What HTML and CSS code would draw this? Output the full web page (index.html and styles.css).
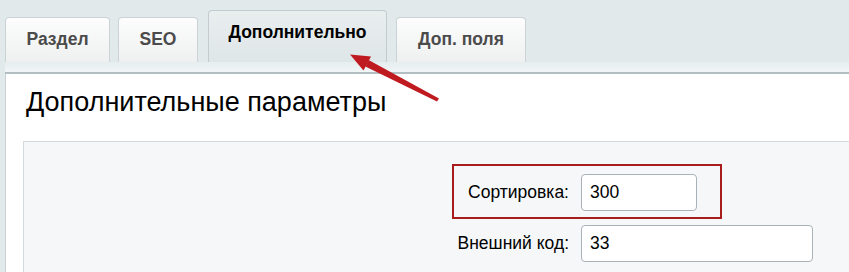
FILE: index.html
```html
<!DOCTYPE html>
<html lang="ru">
<head>
  <meta charset="UTF-8">
  <title>Дополнительные параметры</title>
  <link rel="stylesheet" href="styles.css">
</head>
<body>
  <div class="page">
    <div class="tabs">
      <div class="tab tab-razdel">Раздел</div>
      <div class="tab tab-seo">SEO</div>
      <div class="tab tab-active">Дополнительно</div>
      <div class="tab tab-fields">Доп. поля</div>
    </div>
    <div class="tabs-line"></div>
    <div class="content">
      <h2 class="title">Дополнительные параметры</h2>
      <div class="panel">
        <div class="row">
          <label class="label">Сортировка:</label>
          <input class="field field-short" type="text" value="300">
          <span class="highlight"></span>
        </div>
        <div class="row">
          <label class="label">Внешний код:</label>
          <input class="field field-long" type="text" value="33">
        </div>
      </div>
    </div>

    <!-- стрелка-указатель на вкладку -->
    <svg class="arrow" width="849" height="272" viewBox="0 0 849 272">
      <polygon points="437,101.6 439,98.4 368.6,60 365.4,66.4" fill="#bf1a1f"/>
      <polygon points="350,54.5 371,56.5 363.5,70.5" fill="#bf1a1f"/>
    </svg>
  </div>
</body>
</html>
```

FILE: styles.css
```css
* {
  margin: 0;
  padding: 0;
  box-sizing: border-box;
}

body {
  font-family: "Liberation Sans", Arial, sans-serif;
  background: #e1e9eb;
  overflow: hidden;
}

.page {
  position: relative;
  width: 849px;
  height: 272px;
}

/* вкладки */
.tabs {
  display: flex;
  align-items: flex-end;
  height: 62px;
  padding-left: 5px;
}

.tab {
  height: 45px;
  display: flex;
  align-items: center;
  justify-content: center;
  padding-bottom: 2px;
  font-size: 17.5px;
  font-weight: bold;
  color: #4b4b4b;
  background: linear-gradient(#fdfdfd, #eef0f0);
  border: 1px solid #cbd3d6;
  border-bottom: none;
  border-radius: 4px 4px 0 0;
}

.tab-razdel { width: 105px; }
.tab-seo { width: 80px; margin-left: 8px; }
.tab-active {
  width: 179px;
  height: 52px;
  margin-left: 10px;
  padding-bottom: 9px;
  color: #000;
  background: linear-gradient(#e9eeef, #dfe6e8);
  border-color: #c3ccd0;
}
.tab-fields { width: 130px; margin-left: 9px; }

.tabs-line {
  height: 12px;
  background: linear-gradient(#e6eef0, #f1f5f6);
  border-bottom: 2px solid #b3bec2;
  margin-left: 5px;
}

/* содержимое */
.content {
  margin-left: 5px;
  background: #fff;
  border-left: 1px solid #c9d1d4;
  padding: 12px 0 0 17px;
  height: 198px;
}

.title {
  font-size: 27px;
  font-weight: normal;
  line-height: 32px;
  color: #000;
  padding-left: 3px;
}

.panel {
  margin-top: 23px;
  background: #f5f7f8;
  border-top: 1px solid #d3dadd;
  border-left: 1px solid #d3dadd;
  padding-top: 32px;
  height: 140px;
}

.row {
  position: relative;
  display: flex;
  align-items: center;
  margin-bottom: 14px;
}

.label {
  width: 557px;
  padding-right: 12px;
  text-align: right;
  font-size: 17.5px;
  color: #000;
}

.field {
  height: 37px;
  border: 1px solid #a9b2b7;
  border-radius: 4px;
  background: #fff;
  padding: 0 8px;
  font-family: "Liberation Sans", Arial, sans-serif;
  font-size: 17.5px;
  color: #000;
  outline: none;
}

.field-short { width: 116px; }
.field-long { width: 232px; }

.highlight {
  position: absolute;
  left: 428px;
  top: -10px;
  width: 270px;
  height: 55px;
  border: 2px solid #a91c1c;
  pointer-events: none;
}

.arrow {
  position: absolute;
  left: 0;
  top: 0;
  pointer-events: none;
}
```
